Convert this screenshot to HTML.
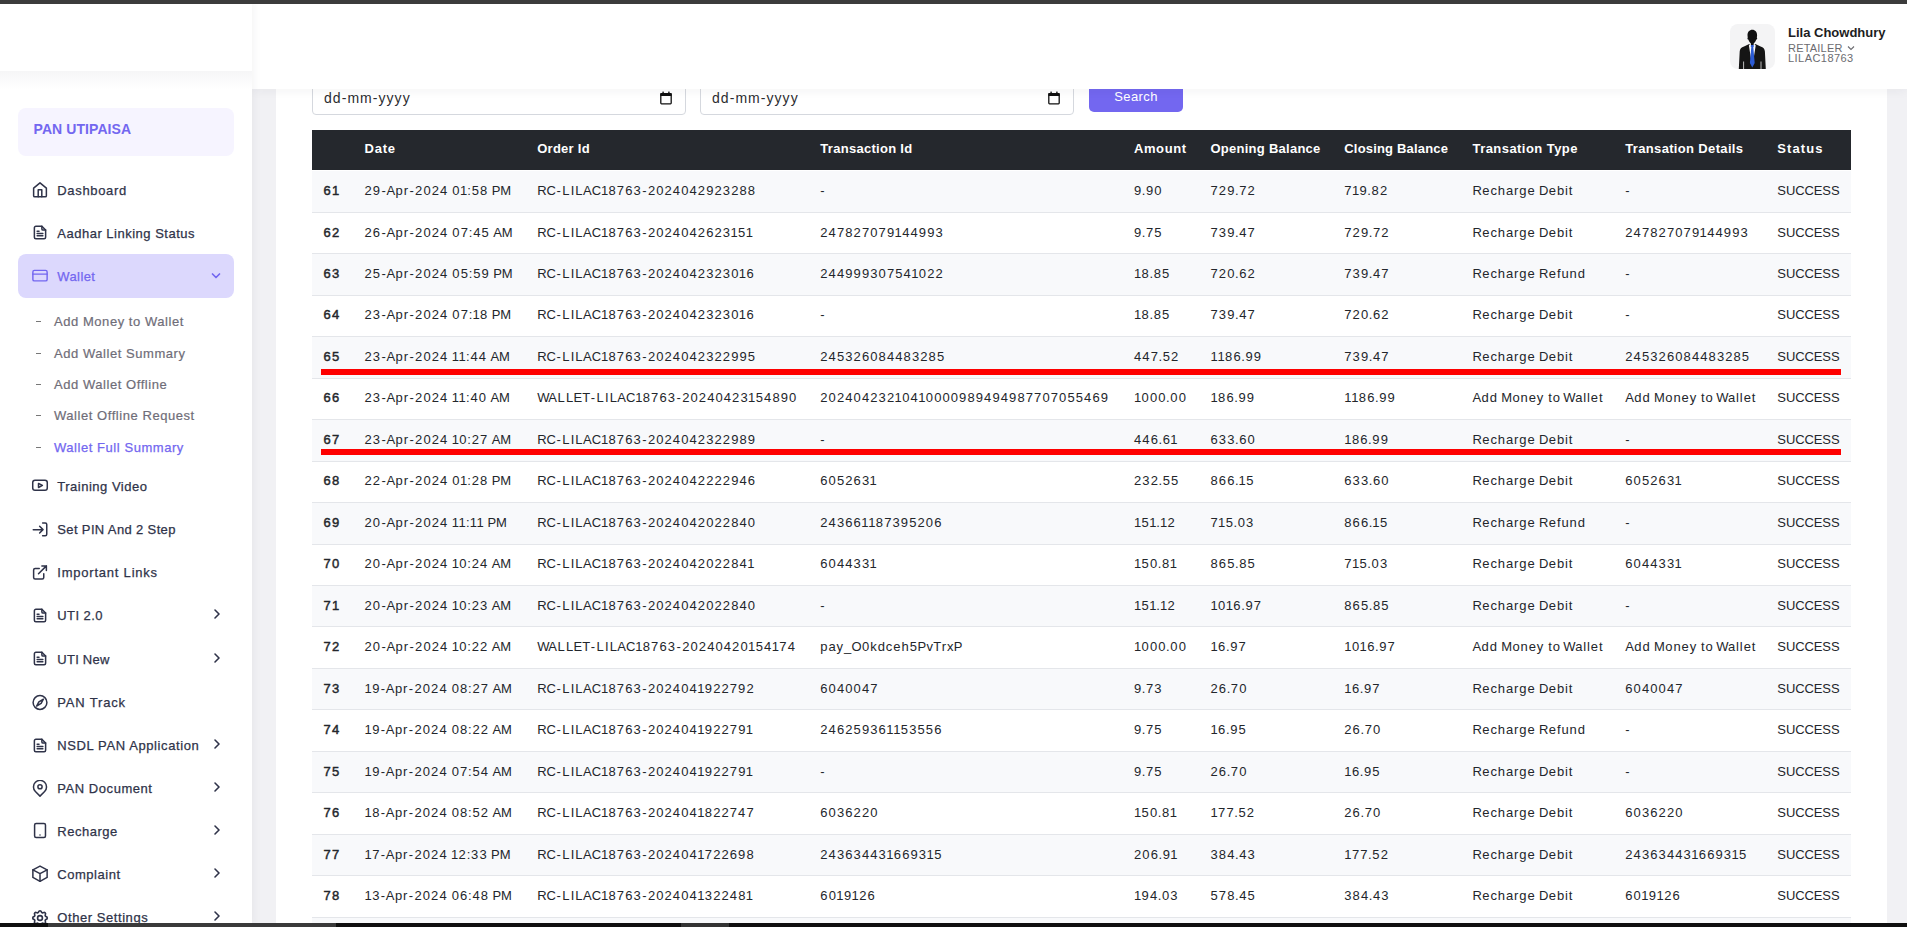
<!DOCTYPE html>
<html><head><meta charset="utf-8">
<style>
*{box-sizing:border-box;margin:0;padding:0}
html,body{width:1907px;height:927px;overflow:hidden}
body{font-family:"Liberation Sans",sans-serif;background:#f1f1f4;position:relative;color:#23262b}
.topbar{position:absolute;left:0;top:0;width:1907px;height:4px;background:#3c3c3c;z-index:50}
.botbar{position:absolute;left:0;top:923px;width:1907px;height:4px;background:#0f0f0f;z-index:50}
.botbar i{position:absolute;top:0;height:4px;background:#3a3a3a}
.sidebar{position:absolute;left:0;top:0;width:252px;height:927px;background:#fff;z-index:20;box-shadow:0 0 10px rgba(47,43,61,.07)}
.brand{position:absolute;left:0;top:0;width:252px;height:71px;background:#fff;z-index:2}
.brandshadow{position:absolute;left:0;top:71px;width:252px;height:18px;background:linear-gradient(#f6f6f7,rgba(255,255,255,0))}
.navbar{position:absolute;left:252px;top:0;width:1655px;height:89px;background:#fff;z-index:10;box-shadow:0 2px 10px rgba(47,43,61,.05)}
.card{position:absolute;left:276px;top:0;width:1611px;height:927px;background:#fff}
table{position:absolute;left:312px;top:130px;width:1539px;border-collapse:separate;border-spacing:0;table-layout:fixed;font-size:13px}
th{background:#25282d;color:#fff;font-weight:bold;text-align:left;height:40px;padding:0 0 3px 11.5px;white-space:nowrap}
tbody tr:first-child td{border-top:1px solid #fff;height:42.8px}
td{height:41.47px;padding:0 0 2px 11.5px;white-space:nowrap;border-bottom:1px solid #e4e6ea;color:#23262b;overflow:visible}
tr:nth-child(odd) td{background:#f8f9fb}
td:first-child{font-weight:normal;letter-spacing:1.2px;-webkit-text-stroke:.45px #23262b}
td i{font-style:normal}
.red{position:absolute;left:321px;width:1520px;height:6px;background:#fe0000;z-index:5}
.inp{position:absolute;top:77px;height:38px;border:1px solid #d5d8de;border-radius:4px;background:#fff}
.inp span{position:absolute;left:11px;top:12px;font-size:14px;color:#2b2c30;letter-spacing:1.05px}
.inp svg{position:absolute;left:347px;top:13px}
.btn{position:absolute;left:1089px;top:74px;width:94px;height:38px;background:#7367f0;border-radius:5px;color:#fff;font-size:13px;text-align:center;padding-top:15px;letter-spacing:.4px}
.ic{position:absolute;left:31px;width:18px;height:18px}
.sbt{position:absolute;left:57.3px;height:20px;line-height:20px;font-size:13px;color:#2f3349;white-space:nowrap;-webkit-text-stroke:.25px #2f3349}
.chev{position:absolute;left:213px;width:8px;height:12px}
.sub{position:absolute;left:54px;height:20px;line-height:20px;font-size:13px;color:#6f6d78;white-space:nowrap;-webkit-text-stroke:.2px #6f6d78}
.sub.act{color:#7367f0;-webkit-text-stroke:.25px #7367f0}
.dash{position:absolute;left:36px;width:5px;height:1.2px;background:#777}
.panbox{position:absolute;left:18px;top:108px;width:216px;height:48px;border-radius:8px;background:#f6f4ff}
.panbox span{position:absolute;left:15.5px;top:13px;font-size:14px;font-weight:bold;color:#7367f0;letter-spacing:.08px}
.walletbox{position:absolute;left:18px;top:254px;width:216px;height:44px;border-radius:8px;background:#dcd8fd}
.walletbox span{position:absolute;left:39.3px;top:12.7px;line-height:20px;font-size:13px;color:#7367f0;letter-spacing:.4px;-webkit-text-stroke:.25px #7367f0}
.walletbox svg.cd{position:absolute;left:193px;top:17.5px}
.avatar{position:absolute;left:1730px;top:24px;width:45px;height:45px;border-radius:8px;background:#f4f4f5;overflow:hidden}
.uname{position:absolute;left:1788px;top:25px;font-size:13px;font-weight:bold;color:#1d1d22;white-space:nowrap}
.urole{position:absolute;left:1788px;font-size:11px;color:#6b6b70;white-space:nowrap;line-height:12px}
.k0{letter-spacing:1.1px}.k1{letter-spacing:1.4px}.k2{letter-spacing:0.7px}.k3{letter-spacing:0.4px}.k4{letter-spacing:0.9px}.k5{letter-spacing:1.3px}.k6{letter-spacing:0.1px}.k7{letter-spacing:0.8px}.k8{letter-spacing:-0.1px}.k9{letter-spacing:0.5px}.k10{letter-spacing:-0.2px}.k11{letter-spacing:1.6px}.k12{letter-spacing:0.6px}.k13{letter-spacing:-0.3px}.k14{letter-spacing:0.0px}.k15{letter-spacing:-1.1px}.k16{letter-spacing:-0.8px}.k17{letter-spacing:-0.5px}.k18{letter-spacing:0.3px}.k19{letter-spacing:1.0px}</style></head><body>
<div class="topbar"></div>
<div class="card"></div>
<div class="inp" style="left:312px;width:374px"><span>dd-mm-yyyy</span><svg width="12" height="14" viewBox="0 0 12 14"><rect x="0.8" y="2.6" width="10.4" height="10.2" rx=".7" fill="none" stroke="#111" stroke-width="1.3"/><rect x="0.4" y="2.2" width="11.2" height="2.8" rx=".5" fill="#111"/><rect x="2.4" y=".6" width="1.4" height="2" fill="#111"/><rect x="8.2" y=".6" width="1.4" height="2" fill="#111"/></svg></div>
<div class="inp" style="left:700px;width:374px"><span>dd-mm-yyyy</span><svg width="12" height="14" viewBox="0 0 12 14"><rect x="0.8" y="2.6" width="10.4" height="10.2" rx=".7" fill="none" stroke="#111" stroke-width="1.3"/><rect x="0.4" y="2.2" width="11.2" height="2.8" rx=".5" fill="#111"/><rect x="2.4" y=".6" width="1.4" height="2" fill="#111"/><rect x="8.2" y=".6" width="1.4" height="2" fill="#111"/></svg></div>
<div class="btn">Search</div>
<table>
<colgroup><col style="width:41.00px"><col style="width:172.70px"><col style="width:283.10px"><col style="width:313.70px"><col style="width:76.50px"><col style="width:133.80px"><col style="width:128.20px"><col style="width:152.80px"><col style="width:152.10px"><col style="width:85.10px"></colgroup>
<thead><tr><th style="letter-spacing:0.00px"></th><th style="letter-spacing:0.77px">Date</th><th style="letter-spacing:0.26px">Order Id</th><th style="letter-spacing:0.29px">Transaction Id</th><th style="letter-spacing:0.60px">Amount</th><th style="letter-spacing:0.26px">Opening Balance</th><th style="letter-spacing:0.18px">Closing Balance</th><th style="letter-spacing:0.45px">Transation Type</th><th style="letter-spacing:0.34px">Transation Details</th><th style="letter-spacing:1.06px">Status</th></tr></thead>
<tbody>
<tr><td>61</td><td><i class="k0">2</i><i class="k1">9</i><i class="k2">-</i><i class="k3">A</i><i class="k4">p</i><i class="k5">r</i><i class="k1">-</i><i class="k0">202</i><i class="k2">4 </i><i class="k3">0</i><i class="k6">1</i><i class="k7">:</i><i class="k0">5</i><i class="k2">8</i><i class="k6"> </i><i class="k8">PM</i></td><td><i class="k8">R</i><i class="k2">C</i><i class="k1">-</i><i class="k0">LI</i><i class="k9">L</i><i class="k8">A</i><i class="k10">C</i><i class="k3">1</i><i class="k0">876</i><i class="k1">3-</i><i class="k0">2024042923288</i></td><td><i class="k11">-</i></td><td><i class="k12">9.</i><i class="k0">90</i></td><td><i class="k0">72</i><i class="k12">9.</i><i class="k0">72</i></td><td><i class="k3">71</i><i class="k12">9.</i><i class="k0">82</i></td><td><i class="k3">R</i><i class="k4">echarg</i><i class="k12">e</i><i class="k6"> </i><i class="k3">D</i><i class="k4">ebit</i></td><td><i class="k11">-</i></td><td><i class="k8">SUCCESS</i></td></tr>
<tr><td>62</td><td><i class="k0">2</i><i class="k1">6</i><i class="k2">-</i><i class="k3">A</i><i class="k4">p</i><i class="k5">r</i><i class="k1">-</i><i class="k0">202</i><i class="k2">4 </i><i class="k0">0</i><i class="k7">7:</i><i class="k0">4</i><i class="k2">5</i><i class="k6"> </i><i class="k8">AM</i></td><td><i class="k8">R</i><i class="k2">C</i><i class="k1">-</i><i class="k0">LI</i><i class="k9">L</i><i class="k8">A</i><i class="k10">C</i><i class="k3">1</i><i class="k0">876</i><i class="k1">3-</i><i class="k0">202404262</i><i class="k3">315</i><i class="k13">1</i></td><td><i class="k0">24782707</i><i class="k3">91</i><i class="k0">44993</i></td><td><i class="k12">9.</i><i class="k0">75</i></td><td><i class="k0">73</i><i class="k12">9.</i><i class="k0">47</i></td><td><i class="k0">72</i><i class="k12">9.</i><i class="k0">72</i></td><td><i class="k3">R</i><i class="k4">echarg</i><i class="k12">e</i><i class="k6"> </i><i class="k3">D</i><i class="k4">ebit</i></td><td><i class="k0">24782707</i><i class="k3">91</i><i class="k0">44993</i></td><td><i class="k8">SUCCESS</i></td></tr>
<tr><td>63</td><td><i class="k0">2</i><i class="k1">5</i><i class="k2">-</i><i class="k3">A</i><i class="k4">p</i><i class="k5">r</i><i class="k1">-</i><i class="k0">202</i><i class="k2">4 </i><i class="k0">0</i><i class="k7">5:</i><i class="k0">5</i><i class="k2">9</i><i class="k6"> </i><i class="k8">PM</i></td><td><i class="k8">R</i><i class="k2">C</i><i class="k1">-</i><i class="k0">LI</i><i class="k9">L</i><i class="k8">A</i><i class="k10">C</i><i class="k3">1</i><i class="k0">876</i><i class="k1">3-</i><i class="k0">2024042323</i><i class="k3">01</i><i class="k0">6</i></td><td><i class="k0">2449993075</i><i class="k3">41</i><i class="k0">022</i></td><td><i class="k3">1</i><i class="k12">8.</i><i class="k0">85</i></td><td><i class="k0">72</i><i class="k12">0.</i><i class="k0">62</i></td><td><i class="k0">73</i><i class="k12">9.</i><i class="k0">47</i></td><td><i class="k3">R</i><i class="k4">echarg</i><i class="k12">e</i><i class="k6"> </i><i class="k3">R</i><i class="k4">efund</i></td><td><i class="k11">-</i></td><td><i class="k8">SUCCESS</i></td></tr>
<tr><td>64</td><td><i class="k0">2</i><i class="k1">3</i><i class="k2">-</i><i class="k3">A</i><i class="k4">p</i><i class="k5">r</i><i class="k1">-</i><i class="k0">202</i><i class="k2">4 </i><i class="k0">0</i><i class="k7">7</i><i class="k6">:</i><i class="k3">1</i><i class="k2">8</i><i class="k6"> </i><i class="k8">PM</i></td><td><i class="k8">R</i><i class="k2">C</i><i class="k1">-</i><i class="k0">LI</i><i class="k9">L</i><i class="k8">A</i><i class="k10">C</i><i class="k3">1</i><i class="k0">876</i><i class="k1">3-</i><i class="k0">2024042323</i><i class="k3">01</i><i class="k0">6</i></td><td><i class="k11">-</i></td><td><i class="k3">1</i><i class="k12">8.</i><i class="k0">85</i></td><td><i class="k0">73</i><i class="k12">9.</i><i class="k0">47</i></td><td><i class="k0">72</i><i class="k12">0.</i><i class="k0">62</i></td><td><i class="k3">R</i><i class="k4">echarg</i><i class="k12">e</i><i class="k6"> </i><i class="k3">D</i><i class="k4">ebit</i></td><td><i class="k11">-</i></td><td><i class="k8">SUCCESS</i></td></tr>
<tr><td>65</td><td><i class="k0">2</i><i class="k1">3</i><i class="k2">-</i><i class="k3">A</i><i class="k4">p</i><i class="k5">r</i><i class="k1">-</i><i class="k0">202</i><i class="k2">4</i><i class="k14"> </i><i class="k13">1</i><i class="k6">1</i><i class="k7">:</i><i class="k0">4</i><i class="k2">4</i><i class="k6"> </i><i class="k8">AM</i></td><td><i class="k8">R</i><i class="k2">C</i><i class="k1">-</i><i class="k0">LI</i><i class="k9">L</i><i class="k8">A</i><i class="k10">C</i><i class="k3">1</i><i class="k0">876</i><i class="k1">3-</i><i class="k0">2024042322995</i></td><td><i class="k0">245326084483285</i></td><td><i class="k0">44</i><i class="k12">7.</i><i class="k0">52</i></td><td><i class="k13">1</i><i class="k3">1</i><i class="k0">8</i><i class="k12">6.</i><i class="k0">99</i></td><td><i class="k0">73</i><i class="k12">9.</i><i class="k0">47</i></td><td><i class="k3">R</i><i class="k4">echarg</i><i class="k12">e</i><i class="k6"> </i><i class="k3">D</i><i class="k4">ebit</i></td><td><i class="k0">245326084483285</i></td><td><i class="k8">SUCCESS</i></td></tr>
<tr><td>66</td><td><i class="k0">2</i><i class="k1">3</i><i class="k2">-</i><i class="k3">A</i><i class="k4">p</i><i class="k5">r</i><i class="k1">-</i><i class="k0">202</i><i class="k2">4</i><i class="k14"> </i><i class="k13">1</i><i class="k6">1</i><i class="k7">:</i><i class="k0">4</i><i class="k2">0</i><i class="k6"> </i><i class="k8">AM</i></td><td><i class="k15">W</i><i class="k9">A</i><i class="k0">L</i><i class="k9">L</i><i class="k8">E</i><i class="k2">T</i><i class="k1">-</i><i class="k0">LI</i><i class="k9">L</i><i class="k8">A</i><i class="k10">C</i><i class="k3">1</i><i class="k0">876</i><i class="k1">3-</i><i class="k0">2024042</i><i class="k3">31</i><i class="k0">54890</i></td><td><i class="k0">20240423</i><i class="k3">21</i><i class="k0">0</i><i class="k3">41</i><i class="k0">0000989494987707055469</i></td><td><i class="k3">1</i><i class="k0">00</i><i class="k12">0.</i><i class="k0">00</i></td><td><i class="k3">1</i><i class="k0">8</i><i class="k12">6.</i><i class="k0">99</i></td><td><i class="k13">1</i><i class="k3">1</i><i class="k0">8</i><i class="k12">6.</i><i class="k0">99</i></td><td><i class="k3">A</i><i class="k4">d</i><i class="k12">d</i><i class="k6"> </i><i class="k3">M</i><i class="k4">one</i><i class="k12">y </i><i class="k4">t</i><i class="k12">o</i><i class="k16"> </i><i class="k17">W</i><i class="k4">allet</i></td><td><i class="k3">A</i><i class="k4">d</i><i class="k12">d</i><i class="k6"> </i><i class="k3">M</i><i class="k4">one</i><i class="k12">y </i><i class="k4">t</i><i class="k12">o</i><i class="k16"> </i><i class="k17">W</i><i class="k4">allet</i></td><td><i class="k8">SUCCESS</i></td></tr>
<tr><td>67</td><td><i class="k0">2</i><i class="k1">3</i><i class="k2">-</i><i class="k3">A</i><i class="k4">p</i><i class="k5">r</i><i class="k1">-</i><i class="k0">202</i><i class="k2">4</i><i class="k14"> </i><i class="k3">1</i><i class="k7">0:</i><i class="k0">2</i><i class="k2">7</i><i class="k6"> </i><i class="k8">AM</i></td><td><i class="k8">R</i><i class="k2">C</i><i class="k1">-</i><i class="k0">LI</i><i class="k9">L</i><i class="k8">A</i><i class="k10">C</i><i class="k3">1</i><i class="k0">876</i><i class="k1">3-</i><i class="k0">2024042322989</i></td><td><i class="k11">-</i></td><td><i class="k0">44</i><i class="k12">6.</i><i class="k3">6</i><i class="k13">1</i></td><td><i class="k0">63</i><i class="k12">3.</i><i class="k0">60</i></td><td><i class="k3">1</i><i class="k0">8</i><i class="k12">6.</i><i class="k0">99</i></td><td><i class="k3">R</i><i class="k4">echarg</i><i class="k12">e</i><i class="k6"> </i><i class="k3">D</i><i class="k4">ebit</i></td><td><i class="k11">-</i></td><td><i class="k8">SUCCESS</i></td></tr>
<tr><td>68</td><td><i class="k0">2</i><i class="k1">2</i><i class="k2">-</i><i class="k3">A</i><i class="k4">p</i><i class="k5">r</i><i class="k1">-</i><i class="k0">202</i><i class="k2">4 </i><i class="k3">0</i><i class="k6">1</i><i class="k7">:</i><i class="k0">2</i><i class="k2">8</i><i class="k6"> </i><i class="k8">PM</i></td><td><i class="k8">R</i><i class="k2">C</i><i class="k1">-</i><i class="k0">LI</i><i class="k9">L</i><i class="k8">A</i><i class="k10">C</i><i class="k3">1</i><i class="k0">876</i><i class="k1">3-</i><i class="k0">2024042222946</i></td><td><i class="k0">60526</i><i class="k3">3</i><i class="k13">1</i></td><td><i class="k0">23</i><i class="k12">2.</i><i class="k0">55</i></td><td><i class="k0">86</i><i class="k12">6</i><i class="k8">.</i><i class="k3">1</i><i class="k0">5</i></td><td><i class="k0">63</i><i class="k12">3.</i><i class="k0">60</i></td><td><i class="k3">R</i><i class="k4">echarg</i><i class="k12">e</i><i class="k6"> </i><i class="k3">D</i><i class="k4">ebit</i></td><td><i class="k0">60526</i><i class="k3">3</i><i class="k13">1</i></td><td><i class="k8">SUCCESS</i></td></tr>
<tr><td>69</td><td><i class="k0">2</i><i class="k1">0</i><i class="k2">-</i><i class="k3">A</i><i class="k4">p</i><i class="k5">r</i><i class="k1">-</i><i class="k0">202</i><i class="k2">4</i><i class="k14"> </i><i class="k13">1</i><i class="k6">1:</i><i class="k13">1</i><i class="k14">1</i><i class="k6"> </i><i class="k8">PM</i></td><td><i class="k8">R</i><i class="k2">C</i><i class="k1">-</i><i class="k0">LI</i><i class="k9">L</i><i class="k8">A</i><i class="k10">C</i><i class="k3">1</i><i class="k0">876</i><i class="k1">3-</i><i class="k0">2024042022840</i></td><td><i class="k0">2436</i><i class="k3">6</i><i class="k13">1</i><i class="k3">1</i><i class="k0">87395206</i></td><td><i class="k3">15</i><i class="k8">1.</i><i class="k3">1</i><i class="k0">2</i></td><td><i class="k3">71</i><i class="k12">5.</i><i class="k0">03</i></td><td><i class="k0">86</i><i class="k12">6</i><i class="k8">.</i><i class="k3">1</i><i class="k0">5</i></td><td><i class="k3">R</i><i class="k4">echarg</i><i class="k12">e</i><i class="k6"> </i><i class="k3">R</i><i class="k4">efund</i></td><td><i class="k11">-</i></td><td><i class="k8">SUCCESS</i></td></tr>
<tr><td>70</td><td><i class="k0">2</i><i class="k1">0</i><i class="k2">-</i><i class="k3">A</i><i class="k4">p</i><i class="k5">r</i><i class="k1">-</i><i class="k0">202</i><i class="k2">4</i><i class="k14"> </i><i class="k3">1</i><i class="k7">0:</i><i class="k0">2</i><i class="k2">4</i><i class="k6"> </i><i class="k8">AM</i></td><td><i class="k8">R</i><i class="k2">C</i><i class="k1">-</i><i class="k0">LI</i><i class="k9">L</i><i class="k8">A</i><i class="k10">C</i><i class="k3">1</i><i class="k0">876</i><i class="k1">3-</i><i class="k0">20240420228</i><i class="k3">4</i><i class="k13">1</i></td><td><i class="k0">60443</i><i class="k3">3</i><i class="k13">1</i></td><td><i class="k3">1</i><i class="k0">5</i><i class="k12">0.</i><i class="k3">8</i><i class="k13">1</i></td><td><i class="k0">86</i><i class="k12">5.</i><i class="k0">85</i></td><td><i class="k3">71</i><i class="k12">5.</i><i class="k0">03</i></td><td><i class="k3">R</i><i class="k4">echarg</i><i class="k12">e</i><i class="k6"> </i><i class="k3">D</i><i class="k4">ebit</i></td><td><i class="k0">60443</i><i class="k3">3</i><i class="k13">1</i></td><td><i class="k8">SUCCESS</i></td></tr>
<tr><td>71</td><td><i class="k0">2</i><i class="k1">0</i><i class="k2">-</i><i class="k3">A</i><i class="k4">p</i><i class="k5">r</i><i class="k1">-</i><i class="k0">202</i><i class="k2">4</i><i class="k14"> </i><i class="k3">1</i><i class="k7">0:</i><i class="k0">2</i><i class="k2">3</i><i class="k6"> </i><i class="k8">AM</i></td><td><i class="k8">R</i><i class="k2">C</i><i class="k1">-</i><i class="k0">LI</i><i class="k9">L</i><i class="k8">A</i><i class="k10">C</i><i class="k3">1</i><i class="k0">876</i><i class="k1">3-</i><i class="k0">2024042022840</i></td><td><i class="k11">-</i></td><td><i class="k3">15</i><i class="k8">1.</i><i class="k3">1</i><i class="k0">2</i></td><td><i class="k3">101</i><i class="k12">6.</i><i class="k0">97</i></td><td><i class="k0">86</i><i class="k12">5.</i><i class="k0">85</i></td><td><i class="k3">R</i><i class="k4">echarg</i><i class="k12">e</i><i class="k6"> </i><i class="k3">D</i><i class="k4">ebit</i></td><td><i class="k11">-</i></td><td><i class="k8">SUCCESS</i></td></tr>
<tr><td>72</td><td><i class="k0">2</i><i class="k1">0</i><i class="k2">-</i><i class="k3">A</i><i class="k4">p</i><i class="k5">r</i><i class="k1">-</i><i class="k0">202</i><i class="k2">4</i><i class="k14"> </i><i class="k3">1</i><i class="k7">0:</i><i class="k0">2</i><i class="k2">2</i><i class="k6"> </i><i class="k8">AM</i></td><td><i class="k15">W</i><i class="k9">A</i><i class="k0">L</i><i class="k9">L</i><i class="k8">E</i><i class="k2">T</i><i class="k1">-</i><i class="k0">LI</i><i class="k9">L</i><i class="k8">A</i><i class="k10">C</i><i class="k3">1</i><i class="k0">876</i><i class="k1">3-</i><i class="k0">2024042</i><i class="k3">01</i><i class="k0">5</i><i class="k3">41</i><i class="k0">74</i></td><td><i class="k4">pay</i><i class="k18">_</i><i class="k9">O</i><i class="k19">0</i><i class="k4">kdce</i><i class="k19">h</i><i class="k9">5</i><i class="k3">PvT</i><i class="k4">r</i><i class="k3">x</i><i class="k8">P</i></td><td><i class="k3">1</i><i class="k0">00</i><i class="k12">0.</i><i class="k0">00</i></td><td><i class="k3">1</i><i class="k12">6.</i><i class="k0">97</i></td><td><i class="k3">101</i><i class="k12">6.</i><i class="k0">97</i></td><td><i class="k3">A</i><i class="k4">d</i><i class="k12">d</i><i class="k6"> </i><i class="k3">M</i><i class="k4">one</i><i class="k12">y </i><i class="k4">t</i><i class="k12">o</i><i class="k16"> </i><i class="k17">W</i><i class="k4">allet</i></td><td><i class="k3">A</i><i class="k4">d</i><i class="k12">d</i><i class="k6"> </i><i class="k3">M</i><i class="k4">one</i><i class="k12">y </i><i class="k4">t</i><i class="k12">o</i><i class="k16"> </i><i class="k17">W</i><i class="k4">allet</i></td><td><i class="k8">SUCCESS</i></td></tr>
<tr><td>73</td><td><i class="k3">1</i><i class="k1">9</i><i class="k2">-</i><i class="k3">A</i><i class="k4">p</i><i class="k5">r</i><i class="k1">-</i><i class="k0">202</i><i class="k2">4 </i><i class="k0">0</i><i class="k7">8:</i><i class="k0">2</i><i class="k2">7</i><i class="k6"> </i><i class="k8">AM</i></td><td><i class="k8">R</i><i class="k2">C</i><i class="k1">-</i><i class="k0">LI</i><i class="k9">L</i><i class="k8">A</i><i class="k10">C</i><i class="k3">1</i><i class="k0">876</i><i class="k1">3-</i><i class="k0">20240</i><i class="k3">41</i><i class="k0">922792</i></td><td><i class="k0">6040047</i></td><td><i class="k12">9.</i><i class="k0">73</i></td><td><i class="k0">2</i><i class="k12">6.</i><i class="k0">70</i></td><td><i class="k3">1</i><i class="k12">6.</i><i class="k0">97</i></td><td><i class="k3">R</i><i class="k4">echarg</i><i class="k12">e</i><i class="k6"> </i><i class="k3">D</i><i class="k4">ebit</i></td><td><i class="k0">6040047</i></td><td><i class="k8">SUCCESS</i></td></tr>
<tr><td>74</td><td><i class="k3">1</i><i class="k1">9</i><i class="k2">-</i><i class="k3">A</i><i class="k4">p</i><i class="k5">r</i><i class="k1">-</i><i class="k0">202</i><i class="k2">4 </i><i class="k0">0</i><i class="k7">8:</i><i class="k0">2</i><i class="k2">2</i><i class="k6"> </i><i class="k8">AM</i></td><td><i class="k8">R</i><i class="k2">C</i><i class="k1">-</i><i class="k0">LI</i><i class="k9">L</i><i class="k8">A</i><i class="k10">C</i><i class="k3">1</i><i class="k0">876</i><i class="k1">3-</i><i class="k0">20240</i><i class="k3">41</i><i class="k0">9227</i><i class="k3">9</i><i class="k13">1</i></td><td><i class="k0">2462593</i><i class="k3">6</i><i class="k13">1</i><i class="k3">1</i><i class="k0">53556</i></td><td><i class="k12">9.</i><i class="k0">75</i></td><td><i class="k3">1</i><i class="k12">6.</i><i class="k0">95</i></td><td><i class="k0">2</i><i class="k12">6.</i><i class="k0">70</i></td><td><i class="k3">R</i><i class="k4">echarg</i><i class="k12">e</i><i class="k6"> </i><i class="k3">R</i><i class="k4">efund</i></td><td><i class="k11">-</i></td><td><i class="k8">SUCCESS</i></td></tr>
<tr><td>75</td><td><i class="k3">1</i><i class="k1">9</i><i class="k2">-</i><i class="k3">A</i><i class="k4">p</i><i class="k5">r</i><i class="k1">-</i><i class="k0">202</i><i class="k2">4 </i><i class="k0">0</i><i class="k7">7:</i><i class="k0">5</i><i class="k2">4</i><i class="k6"> </i><i class="k8">AM</i></td><td><i class="k8">R</i><i class="k2">C</i><i class="k1">-</i><i class="k0">LI</i><i class="k9">L</i><i class="k8">A</i><i class="k10">C</i><i class="k3">1</i><i class="k0">876</i><i class="k1">3-</i><i class="k0">20240</i><i class="k3">41</i><i class="k0">9227</i><i class="k3">9</i><i class="k13">1</i></td><td><i class="k11">-</i></td><td><i class="k12">9.</i><i class="k0">75</i></td><td><i class="k0">2</i><i class="k12">6.</i><i class="k0">70</i></td><td><i class="k3">1</i><i class="k12">6.</i><i class="k0">95</i></td><td><i class="k3">R</i><i class="k4">echarg</i><i class="k12">e</i><i class="k6"> </i><i class="k3">D</i><i class="k4">ebit</i></td><td><i class="k11">-</i></td><td><i class="k8">SUCCESS</i></td></tr>
<tr><td>76</td><td><i class="k3">1</i><i class="k1">8</i><i class="k2">-</i><i class="k3">A</i><i class="k4">p</i><i class="k5">r</i><i class="k1">-</i><i class="k0">202</i><i class="k2">4 </i><i class="k0">0</i><i class="k7">8:</i><i class="k0">5</i><i class="k2">2</i><i class="k6"> </i><i class="k8">AM</i></td><td><i class="k8">R</i><i class="k2">C</i><i class="k1">-</i><i class="k0">LI</i><i class="k9">L</i><i class="k8">A</i><i class="k10">C</i><i class="k3">1</i><i class="k0">876</i><i class="k1">3-</i><i class="k0">20240</i><i class="k3">41</i><i class="k0">822747</i></td><td><i class="k0">6036220</i></td><td><i class="k3">1</i><i class="k0">5</i><i class="k12">0.</i><i class="k3">8</i><i class="k13">1</i></td><td><i class="k3">1</i><i class="k0">7</i><i class="k12">7.</i><i class="k0">52</i></td><td><i class="k0">2</i><i class="k12">6.</i><i class="k0">70</i></td><td><i class="k3">R</i><i class="k4">echarg</i><i class="k12">e</i><i class="k6"> </i><i class="k3">D</i><i class="k4">ebit</i></td><td><i class="k0">6036220</i></td><td><i class="k8">SUCCESS</i></td></tr>
<tr><td>77</td><td><i class="k3">1</i><i class="k1">7</i><i class="k2">-</i><i class="k3">A</i><i class="k4">p</i><i class="k5">r</i><i class="k1">-</i><i class="k0">202</i><i class="k2">4</i><i class="k14"> </i><i class="k3">1</i><i class="k7">2:</i><i class="k0">3</i><i class="k2">3</i><i class="k6"> </i><i class="k8">PM</i></td><td><i class="k8">R</i><i class="k2">C</i><i class="k1">-</i><i class="k0">LI</i><i class="k9">L</i><i class="k8">A</i><i class="k10">C</i><i class="k3">1</i><i class="k0">876</i><i class="k1">3-</i><i class="k0">20240</i><i class="k3">41</i><i class="k0">722698</i></td><td><i class="k0">2436344</i><i class="k3">31</i><i class="k0">669</i><i class="k3">31</i><i class="k0">5</i></td><td><i class="k0">20</i><i class="k12">6.</i><i class="k3">9</i><i class="k13">1</i></td><td><i class="k0">38</i><i class="k12">4.</i><i class="k0">43</i></td><td><i class="k3">1</i><i class="k0">7</i><i class="k12">7.</i><i class="k0">52</i></td><td><i class="k3">R</i><i class="k4">echarg</i><i class="k12">e</i><i class="k6"> </i><i class="k3">D</i><i class="k4">ebit</i></td><td><i class="k0">2436344</i><i class="k3">31</i><i class="k0">669</i><i class="k3">31</i><i class="k0">5</i></td><td><i class="k8">SUCCESS</i></td></tr>
<tr><td>78</td><td><i class="k3">1</i><i class="k1">3</i><i class="k2">-</i><i class="k3">A</i><i class="k4">p</i><i class="k5">r</i><i class="k1">-</i><i class="k0">202</i><i class="k2">4 </i><i class="k0">0</i><i class="k7">6:</i><i class="k0">4</i><i class="k2">8</i><i class="k6"> </i><i class="k8">PM</i></td><td><i class="k8">R</i><i class="k2">C</i><i class="k1">-</i><i class="k0">LI</i><i class="k9">L</i><i class="k8">A</i><i class="k10">C</i><i class="k3">1</i><i class="k0">876</i><i class="k1">3-</i><i class="k0">20240</i><i class="k3">41</i><i class="k0">3224</i><i class="k3">8</i><i class="k13">1</i></td><td><i class="k0">6</i><i class="k3">0191</i><i class="k0">26</i></td><td><i class="k3">1</i><i class="k0">9</i><i class="k12">4.</i><i class="k0">03</i></td><td><i class="k0">57</i><i class="k12">8.</i><i class="k0">45</i></td><td><i class="k0">38</i><i class="k12">4.</i><i class="k0">43</i></td><td><i class="k3">R</i><i class="k4">echarg</i><i class="k12">e</i><i class="k6"> </i><i class="k3">D</i><i class="k4">ebit</i></td><td><i class="k0">6</i><i class="k3">0191</i><i class="k0">26</i></td><td><i class="k8">SUCCESS</i></td></tr>
<tr><td></td><td></td><td></td><td></td><td></td><td></td><td></td><td></td><td></td><td></td></tr>
</tbody></table>
<div class="red" style="top:369px"></div>
<div class="red" style="top:449px"></div>
<div class="navbar">
</div>
<div class="avatar" style="z-index:11"><svg width="45" height="45" viewBox="0 0 45 45"><path d="M22.3 5.8c-2.9 0-4.8 2.3-4.8 5.3 0 .9.1 1.6.3 2.3-.4.1-.5.6-.3 1.3.2.6.5.9.8.9.6 1.8 1.8 3.3 2.6 3.9v1.6h2.8v-1.6c.8-.6 2-2.1 2.6-3.9.3 0 .6-.3.8-.9.2-.7.1-1.2-.3-1.3.2-.7.3-1.4.3-2.3 0-3-1.9-5.3-4.8-5.3z" fill="#111"/><path d="M8.8 45l.9-17.5c.2-2.8 1.6-4.3 4.3-5.1l5.2-2.4 3.1 2.2 3.1-2.2 5.2 2.4c2.7.8 4.1 2.3 4.3 5.1l.9 17.5z" fill="#151515"/><path d="M19.9 20.3l2.4 1.4 2.4-1.4 1 1.3-2.6 16.5h-1.6l-2.6-16.5z" fill="#fafafa"/><path d="M21.1 20.9h2.4l.5 1.3-.7.9 1.4 15.8-2.4 4.6-2.4-4.6 1.4-15.8-.7-.9z" fill="#2c5bd4"/><path d="M13.6 37.5V45M31 37.5V45" stroke="#e8e8e8" stroke-width=".8"/></svg></div>
<div class="uname" style="z-index:11;letter-spacing:0px">Lila Chowdhury</div>
<div class="urole" style="top:41.5px;z-index:11;letter-spacing:.2px">RETAILER <svg width="8" height="6" viewBox="0 0 8 6" style="vertical-align:1px;margin-left:1px"><path d="M1 1.5l3 3 3-3" fill="none" stroke="#6b6b70" stroke-width="1.1"/></svg></div>
<div class="urole" style="top:52px;z-index:11;letter-spacing:.45px">LILAC18763</div>
<div class="sidebar">
<div class="brand"></div><div class="brandshadow"></div>
<div class="panbox"><span>PAN UTIPAISA</span></div>
<div class="walletbox"><span>Wallet</span><svg class="cd" width="10" height="8" viewBox="0 0 10 8"><path d="M1.5 2l3.5 3.5L8.5 2" fill="none" stroke="#7367f0" stroke-width="1.7" stroke-linecap="round" stroke-linejoin="round"/></svg></div>
<svg class="ic" style="top:267px;left:31px;width:18px;height:18px" viewBox="0 0 24 24" fill="none" stroke="#7367f0" stroke-width="1.9" stroke-linecap="round" stroke-linejoin="round"><rect x="2.5" y="4.5" width="19" height="14" rx="2"/><path d="M2.5 9.5h19"/></svg>
<svg class="ic" style="top:181.0px" viewBox="0 0 24 24" fill="none" stroke="#2f3349" stroke-width="2" stroke-linecap="round" stroke-linejoin="round"><path d="M3.5 9.5L12 2.5l8.5 7v10a1.5 1.5 0 0 1-1.5 1.5H5a1.5 1.5 0 0 1-1.5-1.5z"/><path d="M9.6 21v-9.2h4.8V21"/></svg>
<div class="sbt" style="top:180.7px;letter-spacing:0.66px">Dashboard</div>
<svg class="ic" style="top:224.0px" viewBox="0 0 24 24" fill="none" stroke="#2f3349" stroke-width="2" stroke-linecap="round" stroke-linejoin="round"><path d="M14.5 3H6.5a2 2 0 0 0-2 2v12.8a2 2 0 0 0 2 2h11a2 2 0 0 0 2-2V8z"/><path d="M14.5 3v3.5a1.5 1.5 0 0 0 1.5 1.5h3.5"/><path d="M8.2 9.5h2.5M8.2 12.5h7.6M8.2 15.5h7.6"/></svg>
<div class="sbt" style="top:223.7px;letter-spacing:0.50px">Aadhar Linking Status</div>
<svg class="ic" style="top:477.3px" viewBox="0 0 24 24" fill="none" stroke="#2f3349" stroke-width="2" stroke-linecap="round" stroke-linejoin="round"><rect x="2.3" y="4.2" width="19.4" height="13.3" rx="3"/><path d="M10 8.5l5.2 2.7L10 14z"/></svg>
<div class="sbt" style="top:477.0px;letter-spacing:0.50px">Training Video</div>
<svg class="ic" style="top:520.5px" viewBox="0 0 24 24" fill="none" stroke="#2f3349" stroke-width="2" stroke-linecap="round" stroke-linejoin="round"><path d="M3 11.5h13M11.5 7l4.5 4.5-4.5 4.5"/><path d="M15.5 2.5H19a2 2 0 0 1 2 2v13a2 2 0 0 1-2 2h-3.5"/></svg>
<div class="sbt" style="top:520.2px;letter-spacing:0.36px">Set PIN And 2 Step</div>
<svg class="ic" style="top:563.5px" viewBox="0 0 24 24" fill="none" stroke="#2f3349" stroke-width="2" stroke-linecap="round" stroke-linejoin="round"><path d="M11 6H5.5a2 2 0 0 0-2 2v10a2 2 0 0 0 2 2H15a2 2 0 0 0 2-2v-5"/><path d="M10 13L20.5 2.5M14.5 2.5h6v6"/></svg>
<div class="sbt" style="top:563.2px;letter-spacing:0.78px">Important Links</div>
<svg class="ic" style="top:606.5px" viewBox="0 0 24 24" fill="none" stroke="#2f3349" stroke-width="2" stroke-linecap="round" stroke-linejoin="round"><path d="M14.5 3H6.5a2 2 0 0 0-2 2v12.8a2 2 0 0 0 2 2h11a2 2 0 0 0 2-2V8z"/><path d="M14.5 3v3.5a1.5 1.5 0 0 0 1.5 1.5h3.5"/><path d="M8.2 9.5h2.5M8.2 12.5h7.6M8.2 15.5h7.6"/></svg>
<div class="sbt" style="top:606.2px;letter-spacing:0.42px">UTI 2.0</div>
<svg class="chev" style="top:608.0px" viewBox="0 0 8 12"><path d="M2 2l4 4-4 4" fill="none" stroke="#2f3349" stroke-width="1.6" stroke-linecap="round" stroke-linejoin="round"/></svg>
<svg class="ic" style="top:650.0px" viewBox="0 0 24 24" fill="none" stroke="#2f3349" stroke-width="2" stroke-linecap="round" stroke-linejoin="round"><path d="M14.5 3H6.5a2 2 0 0 0-2 2v12.8a2 2 0 0 0 2 2h11a2 2 0 0 0 2-2V8z"/><path d="M14.5 3v3.5a1.5 1.5 0 0 0 1.5 1.5h3.5"/><path d="M8.2 9.5h2.5M8.2 12.5h7.6M8.2 15.5h7.6"/></svg>
<div class="sbt" style="top:649.7px;letter-spacing:0.25px">UTI New</div>
<svg class="chev" style="top:651.5px" viewBox="0 0 8 12"><path d="M2 2l4 4-4 4" fill="none" stroke="#2f3349" stroke-width="1.6" stroke-linecap="round" stroke-linejoin="round"/></svg>
<svg class="ic" style="top:693.5px" viewBox="0 0 24 24" fill="none" stroke="#2f3349" stroke-width="2" stroke-linecap="round" stroke-linejoin="round"><circle cx="12" cy="11.3" r="9.2"/><path d="M7.5 16l3-5.5 6-3.5-3 5.5z"/></svg>
<div class="sbt" style="top:693.2px;letter-spacing:0.82px">PAN Track</div>
<svg class="ic" style="top:736.5px" viewBox="0 0 24 24" fill="none" stroke="#2f3349" stroke-width="2" stroke-linecap="round" stroke-linejoin="round"><path d="M14.5 3H6.5a2 2 0 0 0-2 2v12.8a2 2 0 0 0 2 2h11a2 2 0 0 0 2-2V8z"/><path d="M14.5 3v3.5a1.5 1.5 0 0 0 1.5 1.5h3.5"/><path d="M8.2 9.5h2.5M8.2 12.5h7.6M8.2 15.5h7.6"/></svg>
<div class="sbt" style="top:736.2px;letter-spacing:0.60px">NSDL PAN Application</div>
<svg class="chev" style="top:738.0px" viewBox="0 0 8 12"><path d="M2 2l4 4-4 4" fill="none" stroke="#2f3349" stroke-width="1.6" stroke-linecap="round" stroke-linejoin="round"/></svg>
<svg class="ic" style="top:779.5px" viewBox="0 0 24 24" fill="none" stroke="#2f3349" stroke-width="2" stroke-linecap="round" stroke-linejoin="round"><circle cx="12" cy="9" r="2.8"/><path d="M12 21.5L5.85 15.35A8.7 8.7 0 1 1 18.15 15.35z"/></svg>
<div class="sbt" style="top:779.2px;letter-spacing:0.55px">PAN Document</div>
<svg class="chev" style="top:781.0px" viewBox="0 0 8 12"><path d="M2 2l4 4-4 4" fill="none" stroke="#2f3349" stroke-width="1.6" stroke-linecap="round" stroke-linejoin="round"/></svg>
<svg class="ic" style="top:822.2px" viewBox="0 0 24 24" fill="none" stroke="#2f3349" stroke-width="2" stroke-linecap="round" stroke-linejoin="round"><rect x="4.8" y="2" width="14.5" height="18.5" rx="2"/><path d="M12 17.2v.05"/></svg>
<div class="sbt" style="top:821.9px;letter-spacing:0.50px">Recharge</div>
<svg class="chev" style="top:823.7px" viewBox="0 0 8 12"><path d="M2 2l4 4-4 4" fill="none" stroke="#2f3349" stroke-width="1.6" stroke-linecap="round" stroke-linejoin="round"/></svg>
<svg class="ic" style="top:865.2px" viewBox="0 0 24 24" fill="none" stroke="#2f3349" stroke-width="2" stroke-linecap="round" stroke-linejoin="round"><path d="M12 1.5l9.5 5v10L12 21.8 2.5 16.5v-10z"/><path d="M2.5 6.5l9.5 5 9.5-5M12 11.5v10.3"/></svg>
<div class="sbt" style="top:864.9px;letter-spacing:0.53px">Complaint</div>
<svg class="chev" style="top:866.7px" viewBox="0 0 8 12"><path d="M2 2l4 4-4 4" fill="none" stroke="#2f3349" stroke-width="1.6" stroke-linecap="round" stroke-linejoin="round"/></svg>
<svg class="ic" style="top:908.5px" viewBox="0 0 24 24" fill="none" stroke="#2f3349" stroke-width="2" stroke-linecap="round" stroke-linejoin="round"><g transform="translate(12 12) scale(1.08) translate(-12 -12)"><path d="M10.325 4.317c.426-1.756 2.924-1.756 3.35 0a1.724 1.724 0 0 0 2.573 1.066c1.543-.94 3.31.826 2.37 2.37a1.724 1.724 0 0 0 1.065 2.572c1.756.426 1.756 2.924 0 3.35a1.724 1.724 0 0 0-1.066 2.573c.94 1.543-.826 3.31-2.37 2.37a1.724 1.724 0 0 0-2.572 1.065c-.426 1.756-2.924 1.756-3.35 0a1.724 1.724 0 0 0-2.573-1.066c-1.543.94-3.31-.826-2.37-2.37a1.724 1.724 0 0 0-1.065-2.572c-1.756-.426-1.756-2.924 0-3.35a1.724 1.724 0 0 0 1.066-2.573c-.94-1.543.826-3.31 2.37-2.37 1 .608 2.296.07 2.572-1.065z"/><circle cx="12" cy="12" r="3"/></g></svg>
<div class="sbt" style="top:908.2px;letter-spacing:0.56px">Other Settings</div>
<svg class="chev" style="top:910.0px" viewBox="0 0 8 12"><path d="M2 2l4 4-4 4" fill="none" stroke="#2f3349" stroke-width="1.6" stroke-linecap="round" stroke-linejoin="round"/></svg>
<div class="dash" style="top:321.2px"></div>
<div class="sub" style="top:312.2px;letter-spacing:.55px">Add Money to Wallet</div>
<div class="dash" style="top:352.5px"></div>
<div class="sub" style="top:343.5px;letter-spacing:.55px">Add Wallet Summary</div>
<div class="dash" style="top:383.9px"></div>
<div class="sub" style="top:374.9px;letter-spacing:.55px">Add Wallet Offline</div>
<div class="dash" style="top:414.8px"></div>
<div class="sub" style="top:405.8px;letter-spacing:.55px">Wallet Offline Request</div>
<div class="dash" style="top:446.6px"></div>
<div class="sub act" style="top:437.6px;letter-spacing:.55px">Wallet Full Summary</div>
</div>
<div class="botbar"><i style="left:48px;width:288px"></i><i style="left:681px;width:48px;background:#333"></i></div>
</body></html>
